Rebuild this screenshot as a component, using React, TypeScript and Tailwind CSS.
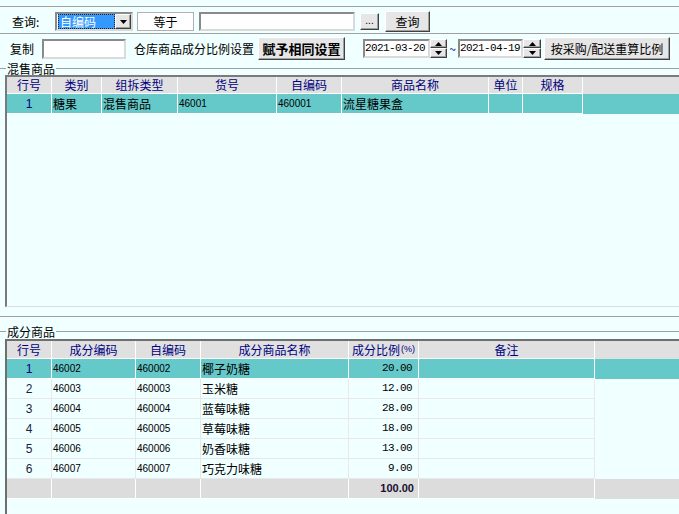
import React from "react";

const raised =
  "bg-[#E6E6E6] border border-t-white border-l-white border-r-[#404040] border-b-[#404040] shadow-[inset_-1px_-1px_0_#A0A0A0]";
const sunken =
  "bg-white border-2 border-t-[#8A8A8A] border-l-[#8A8A8A] border-r-[#DADADA] border-b-[#DADADA]";
const mono = "font-['Liberation_Mono',monospace] text-[11px] tracking-[-0.6px]";
const code = "font-['Liberation_Sans',Arial,sans-serif] text-[10px]";
const num = "font-['Liberation_Sans',Arial,sans-serif] text-[12px]";

function TriDown({ w = 7 }: { w?: number }) {
  return (
    <svg width={w} height={4} viewBox="0 0 7 4">
      <path d="M0 0H7L3.5 4Z" fill="#000" />
    </svg>
  );
}
function TriUp() {
  return (
    <svg width={7} height={4} viewBox="0 0 7 4">
      <path d="M0 4H7L3.5 0Z" fill="#000" />
    </svg>
  );
}

function Spinner({ w }: { w: string }) {
  return (
    <div className={`${w} h-[19px] flex flex-col`}>
      <div className={`${raised} h-[9px] flex items-center justify-center`}>
        <TriUp />
      </div>
      <div className={`${raised} h-[10px] flex items-center justify-center`}>
        <TriDown />
      </div>
    </div>
  );
}

const g1 = [
  { w: "w-[45px]", l: "行号" },
  { w: "w-[50px]", l: "类别" },
  { w: "w-[76px]", l: "组拆类型" },
  { w: "w-[99px]", l: "货号" },
  { w: "w-[65px]", l: "自编码" },
  { w: "w-[147px]", l: "商品名称" },
  { w: "w-[34px]", l: "单位" },
  { w: "w-[60px]", l: "规格" },
];

const g2 = [
  { w: "w-[45px]", l: "行号" },
  { w: "w-[84px]", l: "成分编码" },
  { w: "w-[65px]", l: "自编码" },
  { w: "w-[148px]", l: "成分商品名称" },
  { w: "w-[70px]", l: "成分比例" },
  { w: "w-[176px]", l: "备注" },
];

const rows2 = [
  ["1", "46002", "460002", "椰子奶糖", "20.00"],
  ["2", "46003", "460003", "玉米糖", "12.00"],
  ["3", "46004", "460004", "蓝莓味糖", "28.00"],
  ["4", "46005", "460005", "草莓味糖", "18.00"],
  ["5", "46006", "460006", "奶香味糖", "13.00"],
  ["6", "46007", "460007", "巧克力味糖", "9.00"],
];

function GroupTitle({ t }: { t: string }) {
  return (
    <div className="h-[13px] flex items-center">
      <div className="w-[6px] h-px bg-[#A0A0A0]" />
      <span className="px-[1px]">{t}</span>
      <div className="flex-1 h-px bg-[#A0A0A0]" />
    </div>
  );
}

export default function App() {
  return (
    <div className="w-[679px] h-[514px] overflow-hidden bg-[#F0FFFF] text-[12px] leading-none text-black font-['Noto_Sans_CJK_SC',sans-serif]">
      <div className="h-[6px]" />
      {/* Row 1 */}
      <div className="h-[28px] border-t border-b border-[#A0A0A0] flex items-center pt-[3px]">
        <span className="ml-[12px] w-[43px]">查询:</span>
        <div className={`${sunken} w-[78px] h-[19px] flex items-center`}>
          <div className="ml-[1px] w-[57px] h-[15px] bg-[#3399FF] border border-dotted border-[#202020] text-white flex items-center pl-[1px]">
            自编码
          </div>
          <div className={`${raised} ml-auto w-[16px] h-[15px] flex items-center justify-center`}>
            <TriDown />
          </div>
        </div>
        <div className="ml-[4px] w-[57px] h-[19px] bg-white border border-[#B0B0B0] flex items-center justify-center">
          等于
        </div>
        <div className={`${sunken} ml-[5px] w-[156px] h-[19px]`} />
        <div className={`${raised} ml-[5px] w-[19px] h-[17px] flex items-end justify-center pb-[3px] ${code}`}>
          ...
        </div>
        <div className={`${raised} ml-[6px] w-[45px] h-[21px] flex items-center justify-center`}>
          查询
        </div>
      </div>
      {/* Row 2 */}
      <div className="h-[28px] flex items-center pt-[1px]">
        <span className="ml-[10px] w-[32px]">复制</span>
        <div className={`${sunken} w-[84px] h-[20px]`} />
        <span className="ml-[8px] w-[120px]">仓库商品成分比例设置</span>
        <div className={`${raised} ml-[4px] w-[87px] h-[23px] flex items-center justify-center font-bold text-[13px]`}>
          赋予相同设置
        </div>
        <div className={`${sunken} ml-[18px] w-[67px] h-[19px] flex items-center ${mono}`}>
          2021-03-20
        </div>
        <Spinner w="w-[17px]" />
        <span className="w-[11px] text-center text-[#000080]">~</span>
        <div className={`${sunken} w-[65px] h-[19px] flex items-center ${mono}`}>
          2021-04-19
        </div>
        <Spinner w="w-[18px]" />
        <div className={`${raised} ml-[3px] w-[126px] h-[23px] flex items-center justify-center`}>
          按采购/配送重算比例
        </div>
      </div>

      <GroupTitle t="混售商品" />
      {/* Grid 1 */}
      <div className="ml-[5px] h-[232px] border-l-2 border-t-2 border-l-[#7A7A7A] border-t-[#7A7A7A] border-b border-b-[#DCDCDC] flex flex-col">
        <div className="h-[17px] flex bg-[#E0E0E0]">
          {g1.map((c) => (
            <div
              key={c.l}
              className={`${c.w} shrink-0 border-r border-b border-white flex items-center justify-center text-[#000080]`}
            >
              {c.l}
            </div>
          ))}
          <div className="flex-1" />
        </div>
        <div className="h-[20px] flex bg-[#66C9C9]">
          <div className={`w-[45px] shrink-0 border-r border-b border-white flex items-center justify-center text-[#000080] ${num}`}>
            1
          </div>
          <div className="w-[50px] shrink-0 border-r border-b border-white flex items-center pl-[1px]">糖果</div>
          <div className="w-[76px] shrink-0 border-r border-b border-white flex items-center pl-[1px]">混售商品</div>
          <div className={`w-[99px] shrink-0 border-r border-b border-white flex items-center pl-[1px] ${code}`}>46001</div>
          <div className={`w-[65px] shrink-0 border-r border-b border-white flex items-center pl-[1px] ${code}`}>460001</div>
          <div className="w-[147px] shrink-0 border-r border-b border-white flex items-center pl-[1px]">流星糖果盒</div>
          <div className="w-[34px] shrink-0 border-r border-b border-white" />
          <div className="w-[60px] shrink-0 border-r border-b border-white" />
          <div className="flex-1" />
        </div>
      </div>

      <div className="mt-[9px] h-px bg-[#A0A0A0]" />
      <div className="mt-[8px]">
        <GroupTitle t="成分商品" />
      </div>
      {/* Grid 2 */}
      <div className="mt-[1px] ml-[5px] h-[200px] border-l-2 border-t-2 border-l-[#6E6E6E] border-t-[#6E6E6E] flex flex-col">
        <div className="h-[18px] flex bg-[#E0E0E0]">
          {g2.map((c) => (
            <div
              key={c.l}
              className={`${c.w} shrink-0 border-r border-b border-white flex items-center justify-center text-[#000080]`}
            >
              {c.l}
              {c.l === "成分比例" && (
                <span className="font-['Liberation_Sans',Arial,sans-serif] text-[9px] ml-[1px]">(%)</span>
              )}
            </div>
          ))}
          <div className="flex-1" />
        </div>
        {rows2.map((r, i) => {
          const sel = i === 0;
          const cell = sel
            ? "border-r border-b border-white"
            : "border-r border-b border-[#E8E8E8]";
          return (
            <div key={r[0]} className={`h-[20px] flex ${sel ? "bg-[#66C9C9]" : ""}`}>
              <div className={`w-[45px] shrink-0 ${cell} flex items-center justify-center ${num} ${sel ? "text-[#000080]" : "text-[#1E1E3C]"}`}>
                {r[0]}
              </div>
              <div className={`w-[84px] shrink-0 ${cell} flex items-center pl-[1px] ${code}`}>{r[1]}</div>
              <div className={`w-[65px] shrink-0 ${cell} flex items-center pl-[1px] ${code}`}>{r[2]}</div>
              <div className={`w-[148px] shrink-0 ${cell} flex items-center pl-[1px]`}>{r[3]}</div>
              <div className={`w-[70px] shrink-0 ${cell} flex items-center justify-end pr-[6px] ${mono}`}>{r[4]}</div>
              <div className={`w-[176px] shrink-0 ${cell}`} />
              <div className="flex-1" />
            </div>
          );
        })}
        <div className="h-[20px] flex bg-[#DCDCDC]">
          <div className="w-[45px] shrink-0 border-r border-b border-white" />
          <div className="w-[84px] shrink-0 border-r border-b border-white" />
          <div className="w-[65px] shrink-0 border-r border-b border-white" />
          <div className="w-[148px] shrink-0 border-r border-b border-white" />
          <div className="w-[70px] shrink-0 border-r border-b border-white flex items-center justify-end pr-[4px] font-bold font-['Liberation_Sans',Arial,sans-serif] text-[11px] text-[#1A1030]">
            100.00
          </div>
          <div className="w-[176px] shrink-0 border-r border-b border-white" />
          <div className="flex-1" />
        </div>
      </div>
    </div>
  );
}
